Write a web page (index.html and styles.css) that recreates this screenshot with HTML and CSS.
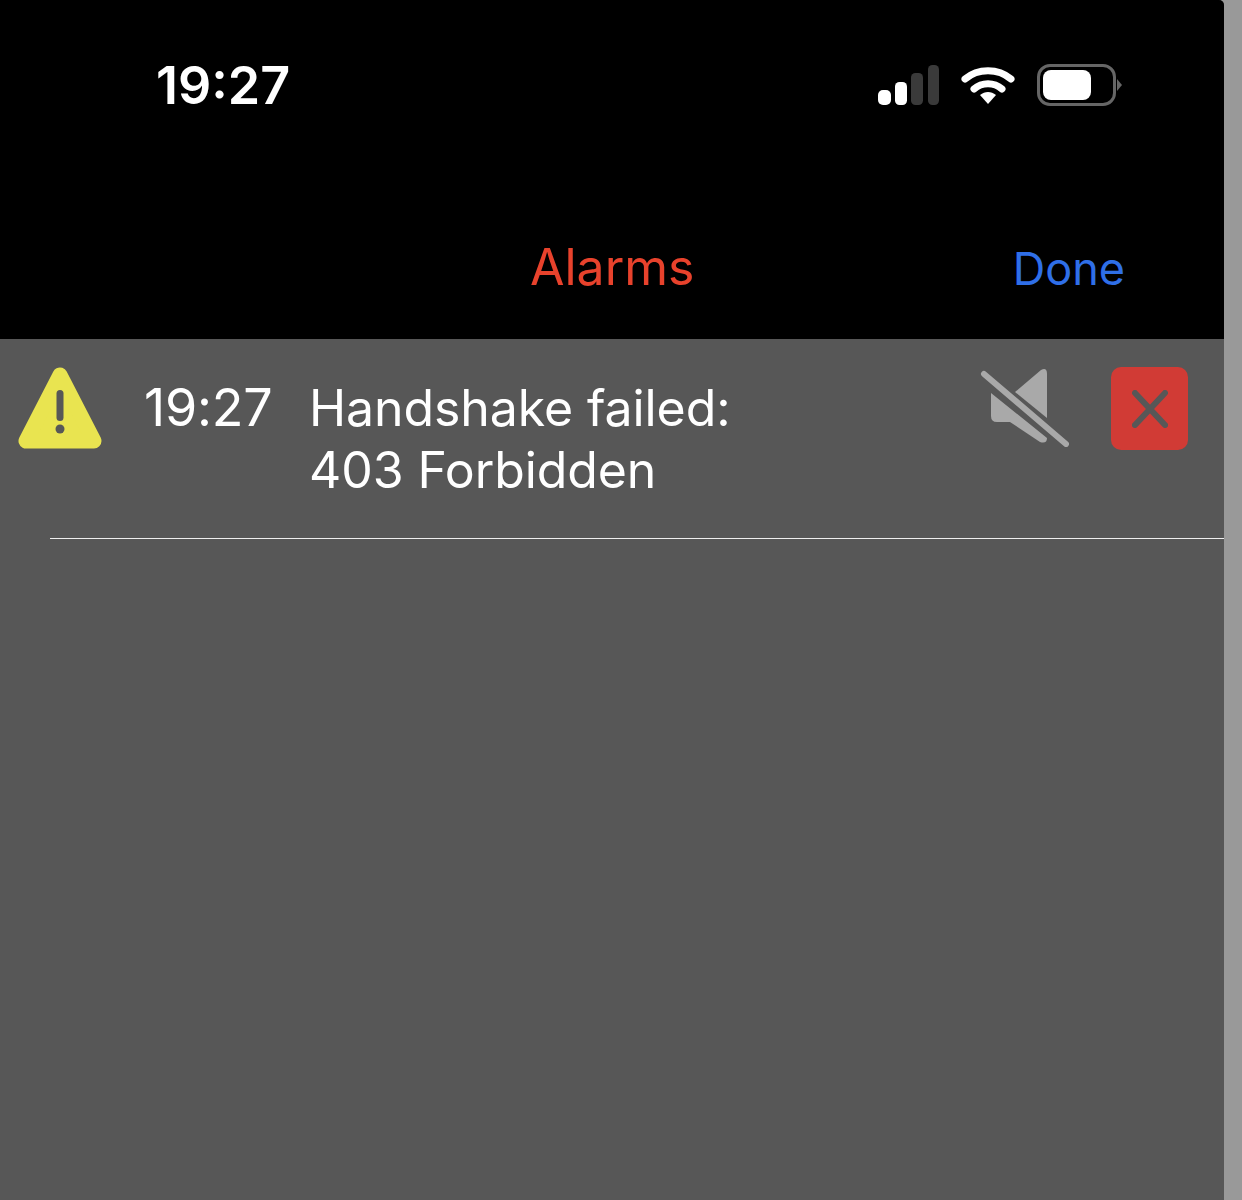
FILE: index.html
```html
<!DOCTYPE html>
<html lang="en">
<head>
    <meta charset="UTF-8">
    <title>Alarms</title>
    <link rel="stylesheet" href="styles.css">
</head>
<body>
    <div class="phone">
        <header class="top">
            <div class="status">
                <span class="clock">19:27</span>
                <div class="status-icons">
                    <svg class="signal" width="62" height="40" viewBox="0 0 62 40">
                        <rect x="0" y="25" width="13" height="15" rx="5" fill="#fff"/>
                        <rect x="17" y="17" width="12" height="23" rx="4.5" fill="#fff"/>
                        <rect x="33" y="8" width="12" height="32" rx="4.5" fill="#3a3a3a"/>
                        <rect x="50" y="0" width="11" height="40" rx="4.5" fill="#3a3a3a"/>
                    </svg>
                    <svg class="wifi" width="54" height="40" viewBox="0 0 54 40">
                        <path d="M4 14 C17 3 37 3 50 14" fill="none" stroke="#fff" stroke-width="7" stroke-linecap="round"/>
                        <path d="M13 24 C21 17 33 17 41 24" fill="none" stroke="#fff" stroke-width="7" stroke-linecap="round"/>
                        <path d="M19 30 C24 26 30 26 35 30 L27 39 Z" fill="#fff"/>
                    </svg>
                    <div class="battery">
                        <div class="battery-shell"><div class="battery-fill"></div></div>
                        <div class="battery-cap"></div>
                    </div>
                </div>
            </div>
            <nav class="title-bar">
                <h1 class="title">Alarms</h1>
                <a class="done" href="#">Done</a>
            </nav>
        </header>

        <main class="list">
            <div class="alarm">
                <svg class="warn" width="86" height="84" viewBox="0 0 86 84">
                    <path d="M43 8 L9 74 L77 74 Z" fill="#e9e450" stroke="#e9e450" stroke-width="15" stroke-linejoin="round"/>
                    <rect x="39.500" y="23" width="7" height="31" rx="3.500" fill="#575757"/>
                    <circle cx="43" cy="62" r="4.500" fill="#575757"/>
                </svg>
                <span class="alarm-time">19:27</span>
                <p class="alarm-text">Handshake failed:<br>403 Forbidden</p>
                <svg class="mute" width="90" height="80" viewBox="0 0 90 80">
                    <path d="M36 25 L62 3 Q68 0 68 7 L68 51 Z" fill="#a9a9a9"/>
                    <path d="M12 26 L68 71 Q68 77 61 75 L31 55 L18 55 Q12 55 12 49 Z" fill="#a9a9a9"/>
                    <path d="M5 7 L87 77" stroke="#a9a9a9" stroke-width="6" stroke-linecap="round"/>
                </svg>
                <button class="delete">
                    <svg width="36" height="38" viewBox="0 0 36 38">
                        <path d="M3 3 L33 35 M33 3 L3 35" stroke="#575757" stroke-width="6" stroke-linecap="round"/>
                    </svg>
                </button>
            </div>
        </main>
    </div>
</body>
</html>
```

FILE: styles.css
```css
html, body {
    margin: 0;
    padding: 0;
}
body {
    width: 1242px;
    height: 1200px;
    overflow: hidden;
    background: #999;
    font-family: Inter, "Noto Sans", sans-serif;
}
.phone {
    width: 1224px;
    height: 1200px;
    display: flex;
    flex-direction: column;
    background: #575757;
    border-top-right-radius: 5px;
    overflow: hidden;
}
.top {
    height: 339px;
    background: #000;
    flex-shrink: 0;
}
.status {
    display: flex;
    justify-content: space-between;
    align-items: center;
    height: 170px;
    padding: 0 102px 0 156px;
    box-sizing: border-box;
}
.clock {
    color: #fff;
    font-size: 52px;
    font-weight: 600;
}
.status-icons {
    display: flex;
    align-items: center;
    gap: 22px;
}
.signal {
    margin-right: -1px;
}
.battery {
    display: flex;
    align-items: center;
    gap: 1px;
}
.battery-shell {
    width: 79px;
    height: 42px;
    box-sizing: border-box;
    border: 3px solid #666;
    border-radius: 13px;
    padding: 3px;
}
.battery-fill {
    width: 48px;
    height: 100%;
    background: #fff;
    border-radius: 8px;
}
.battery-cap {
    width: 0;
    height: 0;
    border-left: 5px solid #666;
    border-top: 6px solid transparent;
    border-bottom: 6px solid transparent;
}
.title-bar {
    display: flex;
    justify-content: space-between;
    align-items: center;
    height: 60px;
    margin-top: 68px;
    padding: 0 99px 0 530px;
}
.title {
    margin: 0 0 2px;
    color: #e8422c;
    font-size: 50px;
    font-weight: 400;
}
.done {
    color: #2f6fe8;
    font-size: 45px;
    text-decoration: none;
}
.list {
    flex: 1;
}
.alarm {
    height: 200px;
    box-sizing: border-box;
    margin-left: 50px;
    border-bottom: 1px solid #eee;
    display: flex;
    align-items: flex-start;
    padding-top: 28px;
}
.warn {
    margin: 0 0 0 -33px;
    flex-shrink: 0;
}
.alarm-time {
    margin: 10px 0 0 41px;
    width: 165px;
    flex-shrink: 0;
    color: #fff;
    font-size: 52px;
    line-height: 62px;
    letter-spacing: -0.2px;
}
.alarm-text {
    margin: 10px 0 0;
    flex: 1;
    color: #fff;
    font-size: 50px;
    line-height: 62px;
    letter-spacing: -0.1px;
}
.mute {
    flex-shrink: 0;
    margin: 0 42px 0 0;
}
.delete {
    width: 77px;
    height: 83px;
    flex-shrink: 0;
    margin-right: 36px;
    padding: 0;
    border: 0;
    border-radius: 10px;
    background: #d13b35;
    display: flex;
    align-items: center;
    justify-content: center;
}
```
